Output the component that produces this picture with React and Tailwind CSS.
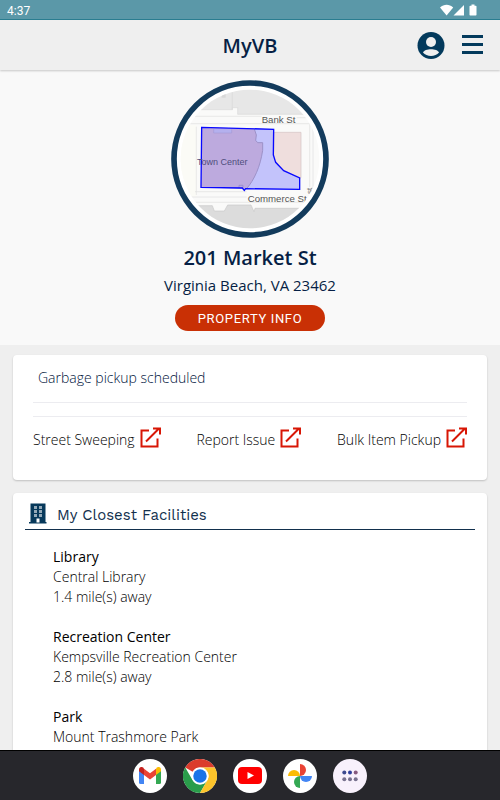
import clsx from 'clsx'

const LINKS = ['Street Sweeping', 'Report Issue', 'Bulk Item Pickup']

const FACILITIES = [
  { type: 'Library', name: 'Central Library', distance: 1.4 },
  { type: 'Recreation Center', name: 'Kempsville Recreation Center', distance: 2.8 },
  { type: 'Park', name: 'Mount Trashmore Park' },
]

const APPS = [
  { name: 'Gmail', icon: GmailIcon, tile: 'bg-white' },
  { name: 'Chrome', icon: ChromeIcon, tile: 'bg-white' },
  { name: 'YouTube', icon: YouTubeIcon, tile: 'bg-white' },
  { name: 'Photos', icon: PhotosIcon, tile: 'bg-white' },
  { name: 'All apps', icon: AppsIcon, tile: 'bg-[#f8f1fc]' },
]

export default function App() {
  return (
    <div className="flex h-screen flex-col bg-[#efefef] font-['Open_Sans',sans-serif] text-black">
      <StatusBar />
      <Header />
      <main className="min-h-0 flex-1 overflow-hidden">
        <PropertyHero />
        <div className="flex flex-col gap-[13px] px-[13px] pt-[10px]">
          <ServicesCard />
          <FacilitiesCard />
        </div>
      </main>
      <Dock />
    </div>
  )
}

function StatusBar() {
  return (
    <div className="flex h-5 shrink-0 items-center justify-between border-b border-[#2b7f92] bg-[#5b98a8] pr-[22px] pl-[7px] text-white">
      <span className="pt-[2px] font-[Roboto,sans-serif] text-xs">4:37</span>
      <svg viewBox="0 0 38 12" className="h-3 w-[38px]" fill="currentColor" aria-hidden="true">
        <path d="M0 3.500C4-.2 9.200-.2 13.200 3.500L6.600 11.500Z" />
        <path d="M24 1V11.500H13.500Z" />
        <path d="M31.500 0.500h3v1.200h1.300q.7 0 .7.700v8.400q0 .7-.7.700h-5.600q-.7 0-.7-.7V2.400q0-.7.7-.7h1.300Z" />
      </svg>
    </div>
  )
}

function Header() {
  return (
    <header className="z-10 grid h-[50px] shrink-0 grid-cols-[1fr_auto_1fr] items-center bg-[#efefef] px-4 shadow-[0_1px_2px_rgba(0,0,0,0.2)]">
      <h1 className="col-start-2 pt-[2px] text-xl font-semibold text-[#061f45]">MyVB</h1>
      <div className="flex items-center justify-end gap-4">
        <button type="button" aria-label="Account">
          <svg viewBox="0 0 28 28" className="size-7">
            <circle cx="14" cy="14.500" r="13.500" fill="#033a5c" />
            <circle cx="14" cy="11" r="5" fill="#efefef" />
            <path d="M6 21.500C7.500 17 20.500 17 22 21.500C18.500 26 9.500 26 6 21.500Z" fill="#efefef" />
          </svg>
        </button>
        <button type="button" aria-label="Menu">
          <svg viewBox="0 0 23 23" className="h-[23px] w-[23px]" fill="#033a5c">
            <path d="M1 1h21v3H1zM1 9h21v3H1zM1 17h21v3H1z" />
          </svg>
        </button>
      </div>
    </header>
  )
}

function PropertyHero() {
  return (
    <section className="flex flex-col items-center bg-[#f9f9f9] pt-[10px] pb-[14px] text-[#061f45]">
      <ParcelMap />
      <h2 className="mt-1 text-xl leading-8 font-semibold">201 Market St</h2>
      <p className="text-[15px] leading-[22px]">Virginia Beach, VA 23462</p>
      <button
        type="button"
        className="mt-[9px] h-[26px] w-[150px] rounded-full bg-[#c93005] pt-px font-[Roboto,sans-serif] text-[13px] tracking-wider text-white"
      >
        PROPERTY INFO
      </button>
    </section>
  )
}

function ParcelMap() {
  return (
    <svg viewBox="18 15 474 474" className="size-[158px]" role="img" aria-label="Parcel map">
      <defs>
        <clipPath id="map-face">
          <circle cx="255" cy="252" r="208" />
        </clipPath>
      </defs>
      <circle cx="255" cy="252" r="228" fill="#fff" stroke="#133b5c" strokeWidth="17" />
      <g clipPath="url(#map-face)">
        <rect x="40" y="40" width="430" height="430" fill="#fafaf9" />
        <path d="M40 150H94V365H40Z" fill="#fbfbf6" />
        <path d="M40 40H470V118H218V98H202V104H40Z" fill="#e7e7e7" />
        <path d="M202 40V104M40 104H202V98H218V118H470" fill="none" stroke="#dadada" strokeWidth="2" />
        <path d="M170 56h12v12h-12z" fill="#d8d8d8" />
        <path d="M40 392H142L148 408H178L188 390H258L267 410L270 400H470V470H40Z" fill="#dcdcdc" />
        <path d="M40 392H142L148 408H178L188 390H258L267 410L270 400H470" fill="none" stroke="#c9c9c9" strokeWidth="2" />
        <path d="M40 124H290M395 128H470M40 146H436M90 350H245M60 366H245M60 382H420M434 148V336M444 148V350M94 155V360" fill="none" stroke="#dfdfdf" strokeWidth="2" />
        <path d="M326 172H408V308L400 314L355 287L330 262L326 240Z" fill="#efdedd" stroke="#d3c3c3" strokeWidth="2" />
        <path d="M110 157L326 163L325 240L332 262L356 287L404 309V343L242 341L238 346L232 339L108 337Z" fill="#c3c3fb" />
        <path d="M110 157L268 161L274 180L272 196L278 203H293V226C286 274 268 315 244 342L108 337Z" fill="#bdaade" />
        <path d="M268 162L274 180L272 196L278 203H293V226C286 274 268 315 244 342" fill="none" stroke="#9c91c7" strokeWidth="3" />
        <path d="M146 162V174H200V163" fill="#b4b0ee" stroke="#a69bd6" strokeWidth="2" />
        <path d="M222 339V331H234V338" fill="none" stroke="#8d83c9" strokeWidth="2" />
        <path d="M110 157L326 163L325 240L332 262L356 287L404 309V343L242 341L238 346L232 339L108 337Z" fill="none" stroke="#0707ff" strokeWidth="4" />
        <g className="font-['Liberation_Sans',sans-serif]">
          <text x="96" y="270" fontSize="27" fill="#4f4d7c">Town Center</text>
          <text x="290" y="145" fontSize="29" fill="#555">Bank St</text>
          <text x="248" y="381" fontSize="29" fill="#555">Commerce St</text>
          <text transform="translate(441 357) rotate(-90)" fontSize="24" fill="#666">st</text>
        </g>
      </g>
    </svg>
  )
}

function ServicesCard() {
  return (
    <section className="h-[125px] rounded bg-white px-5 shadow-[0_1px_2px_rgba(0,0,0,0.2)]">
      <p className="px-[5px] pt-3 pb-[13px] text-sm leading-[22px] font-light text-[#00143c]">Garbage pickup scheduled</p>
      <div className="h-[15px] border-y border-[#ececf0]" />
      <nav className="mt-2 flex justify-between">
        {LINKS.map((label) => (
          <a key={label} href="#" className="flex items-center gap-[5px] text-sm leading-[30px] font-light">
            {label}
            <ExternalIcon />
          </a>
        ))}
      </nav>
    </section>
  )
}

function ExternalIcon() {
  return (
    <svg viewBox="0 0 21 21" className="mb-[6px] h-[21px] w-[21px]" fill="none" stroke="#d81605" strokeWidth="2" aria-hidden="true">
      <path d="M9 3.500H1.500V19.500H17.500V11.500M6 14.500L18.500 2M13 1.500H20V7.500" />
    </svg>
  )
}

function FacilitiesCard() {
  return (
    <section className="rounded bg-white px-3 pb-5 shadow-[0_1px_2px_rgba(0,0,0,0.2)]">
      <h2 className="flex h-[37px] items-center gap-[9px] border-b border-[#12304d] px-1 pt-2 text-[15px] text-[#12304d]">
        <svg viewBox="0 0 19 21" className="mb-1 h-[21px] w-[19px]" aria-hidden="true">
          <path d="M1.500 0.500H16.500V19H17.500V20.500H0V19H1.500Z" fill="#07395b" />
          <path d="M5 3h3v3H5zM10 3h3v3h-3zM5 7h3v3H5zM10 7h3v3h-3zM5 11h3v3H5zM10 11h3v3h-3z" fill="#93a9b8" />
          <path d="M7.500 15.500h3v4h-3z" fill="#fff" />
        </svg>
        <span className="font-['Work_Sans',Inter,sans-serif]">My Closest Facilities</span>
      </h2>
      <ul className="mt-[17px] flex flex-col gap-5 px-7 text-sm leading-5">
        {FACILITIES.map((f) => (
          <li key={f.type}>
            <h3 className="font-medium">{f.type}</h3>
            <p className="font-light">{f.name}</p>
            {f.distance && <p className="font-light">{f.distance} mile(s) away</p>}
          </li>
        ))}
      </ul>
    </section>
  )
}

function Dock() {
  return (
    <nav className="z-10 flex h-[50px] shrink-0 items-center justify-center gap-4 border-t border-black bg-[#27272c]">
      {APPS.map(({ name, icon: Icon, tile }) => (
        <button
          key={name}
          type="button"
          aria-label={name}
          className={clsx('flex size-[34px] items-center justify-center rounded-full', tile)}
        >
          <Icon />
        </button>
      ))}
    </nav>
  )
}

function GmailIcon() {
  return (
    <svg viewBox="0 0 22 17" className="h-[17px] w-[22px]">
      <path d="M0 3V15.500Q0 17 1.500 17H5V6.500Z" fill="#4285f4" />
      <path d="M22 3V15.500Q22 17 20.500 17H17V6.500Z" fill="#34a853" />
      <path d="M17 1.800V8L22 4.300V2.500C22 0.300 19.500-.8 17.800.6Z" fill="#fbbc04" />
      <path d="M5 8V1.800L11 6.300L17 1.800V8L11 12.500Z" fill="#ea4335" />
      <path d="M0 2.500V4.300L5 8V1.800L4.200.6C2.500-.8 0 .3 0 2.500Z" fill="#c5221f" />
    </svg>
  )
}

function ChromeIcon() {
  return (
    <svg viewBox="0 0 48 48" className="size-[34px]">
      <path d="M3.200 12A24 24 0 0 1 44.800 12H24A12 12 0 0 0 13.600 18Z" fill="#db3b2c" />
      <path d="M3.200 12A24 24 0 0 0 24 48L34.400 30A12 12 0 0 1 13.600 30Z" fill="#2a9d4b" />
      <path d="M44.800 12A24 24 0 0 1 24 48L34.400 30A12 12 0 0 0 24 12Z" fill="#fdc42b" />
      <circle cx="24" cy="24" r="12" fill="#fff" />
      <circle cx="24" cy="24" r="9.500" fill="#1a73e8" />
    </svg>
  )
}

function YouTubeIcon() {
  return (
    <svg viewBox="0 0 24 17" className="h-[17px] w-6">
      <rect width="24" height="17" rx="4" fill="#f00" />
      <path d="M9.500 5V12L16 8.500Z" fill="#fff" />
    </svg>
  )
}

function PhotosIcon() {
  return (
    <svg viewBox="0 0 24 24" className="size-6">
      <path d="M12 0A6 6 0 0 1 12 12Z" fill="#ea4335" />
      <path d="M24 12A6 6 0 0 1 12 12Z" fill="#4285f4" />
      <path d="M12 24A6 6 0 0 1 12 12Z" fill="#34a853" />
      <path d="M0 12A6 6 0 0 1 12 12Z" fill="#fbbc04" />
    </svg>
  )
}

function AppsIcon() {
  return (
    <svg viewBox="0 0 16 12" className="h-3 w-4">
      <circle cx="2.300" cy="2.500" r="2" fill="#3d4a8f" />
      <circle cx="8" cy="2.500" r="2" fill="#2e3f9b" />
      <circle cx="13.700" cy="2.500" r="2" fill="#86597f" />
      <circle cx="2.300" cy="9.300" r="2" fill="#77718e" />
      <circle cx="8" cy="9.300" r="2" fill="#77718e" />
      <circle cx="13.700" cy="9.300" r="2" fill="#77718e" />
    </svg>
  )
}
